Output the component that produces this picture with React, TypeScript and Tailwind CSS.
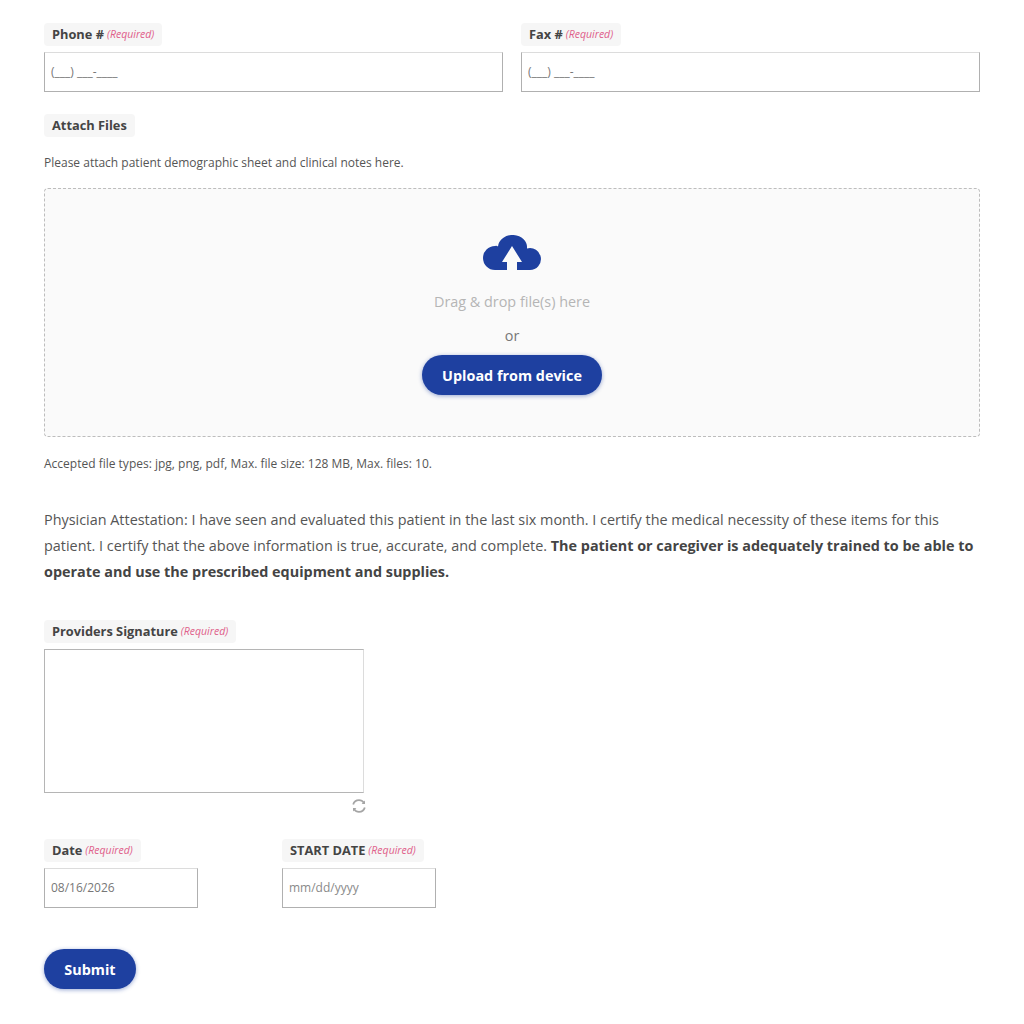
import { ReactNode } from "react";

const Label = ({ text, required = true }: { text: string; required?: boolean }) => (
  <div className="inline-flex h-[23px] items-center self-start rounded-sm bg-[#f6f6f6] px-2 text-[12.8px] font-bold leading-none text-[#444444]">
    {text}
    {required && <span className="ml-[3px] text-[10.5px] font-normal italic text-[#e0608a]">(Required)</span>}
  </div>
);

const Field = ({ label, className, children }: { label: string; className: string; children: ReactNode }) => (
  <div className={`flex flex-col ${className}`}>
    <Label text={label} />
    <div className="mt-[6px] flex h-[40px] items-center border border-[#b0b0b0] border-t-[#dcdcdc] bg-white px-[6px] text-[12px] text-[#777777]">
      {children}
    </div>
  </div>
);

const SubmitButton = ({ text, className }: { text: string; className: string }) => (
  <button className={`h-[40px] rounded-full bg-[#1e40a0] pt-[2px] text-[14.4px] font-bold text-white shadow-[0_1px_4px_rgba(30,64,160,0.45)] ${className}`}>
    {text}
  </button>
);

export default function App() {
  return (
    <div className="min-h-[1024px] bg-white pl-[44px] pr-[44px] pt-[23px] text-[#555555] [font-family:'Open_Sans',sans-serif]">
      <div className="flex gap-[18px]">
        <Field label="Phone #" className="w-[459px]">(___) ___-____</Field>
        <Field label="Fax #" className="w-[459px]">(___) ___-____</Field>
      </div>

      <div className="mt-[22px] flex flex-col">
        <Label text="Attach Files" required={false} />
        <p className="mt-[17px] text-[12px] leading-[18px] text-[#555555]">
          Please attach patient demographic sheet and clinical notes here.
        </p>
      </div>

      <div className="mt-[16px] flex h-[249px] flex-col items-center rounded-[4px] border border-dashed border-[#bdbdbd] bg-[#fafafa] pt-[46px]">
        <svg width="58" height="36" viewBox="0 0 58 36" className="text-[#1e40a0]">
          <path
            fill="currentColor"
            d="M12 35 A12 12 0 0 1 12 11 A3 3 0 0 1 15 11.4 A14.5 12.4 0 0 1 44 13.4 A11 11 0 1 1 47 35 H34 V27 H39 L29 11 L19 27 H24 V35 Z"
          />
        </svg>
        <p className="mt-[21px] text-[14.4px] leading-[20px] text-[#b5b5b5]">Drag &amp; drop file(s) here</p>
        <p className="mt-[14px] text-[14.4px] leading-[20px] text-[#777777]">or</p>
        <SubmitButton text="Upload from device" className="mt-[9px] w-[180px]" />
      </div>

      <p className="mt-[18px] text-[12px] leading-[18px] text-[#555555]">
        Accepted file types: jpg, png, pdf, Max. file size: 128 MB, Max. files: 10.
      </p>

      <p className="mt-[34px] text-[14.4px] leading-[26px] text-[#555555]">
        Physician Attestation: I have seen and evaluated this patient in the last six month. I certify the medical necessity of these items for this patient. I certify that the above information is true, accurate, and complete.{" "}
        <strong className="font-bold text-[#444444]">The patient or caregiver is adequately trained to be able to operate and use the prescribed equipment and supplies.</strong>
      </p>

      <div className="mt-[35px] flex w-[323px] flex-col">
        <Label text="Providers Signature" />
        <div className="mt-[6px] h-[144px] w-[320px] border border-[#b5b5b5] border-r-[#dcdcdc] bg-white" />
        <div className="mt-[5px] flex justify-end">
          <svg width="16" height="16" viewBox="0 0 16 16" fill="none" stroke="#a5a5a5" strokeWidth="1.8">
            <path d="M2.2 6.5 C3 3.8 5.3 2.2 8 2.2 C10 2.2 11.8 3.2 12.9 4.8" />
            <path d="M13.8 9.5 C13 12.2 10.7 13.8 8 13.8 C6 13.8 4.2 12.8 3.1 11.2" />
            <path d="M14 2.5 L14 6 L10.6 6" fill="#a5a5a5" stroke="none" />
            <path d="M2 13.5 L2 10 L5.4 10" fill="#a5a5a5" stroke="none" />
          </svg>
        </div>
      </div>

      <div className="mt-[25px] flex gap-[84px]">
        <Field label="Date" className="w-[154px]">08/16/2026</Field>
        <Field label="START DATE" className="w-[154px]"><span className="text-[#8a8a8a]">mm/dd/yyyy</span></Field>
      </div>

      <SubmitButton text="Submit" className="mt-[41px] w-[92px]" />
    </div>
  );
}
